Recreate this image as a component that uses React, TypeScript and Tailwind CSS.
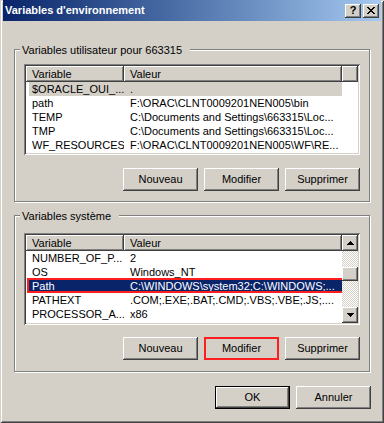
import React from "react"
import clsx from "clsx"

// classic 3D edges
const raised = "shadow-[inset_-1px_-1px_#404040,inset_1px_1px_#ffffff,inset_-2px_-2px_#808080,inset_2px_2px_#d4d0c8]"
const sunken = "shadow-[inset_1px_1px_#808080,inset_-1px_-1px_#ffffff,inset_2px_2px_#404040,inset_-2px_-2px_#d4d0c8]"
const headerEdge = "shadow-[inset_-1px_-1px_#404040,inset_1px_1px_#ffffff,inset_-2px_-2px_#808080]"
const checker = "bg-[image:repeating-conic-gradient(#d4d0c8_0%_25%,#ffffff_0%_50%)] bg-[length:2px_2px]"

type Row = [string, string]

const userVars: Row[] = [
  ["$ORACLE_OUI_...", "."],
  ["path", "F:\\ORAC\\CLNT0009201NEN005\\bin"],
  ["TEMP", "C:\\Documents and Settings\\663315\\Loc..."],
  ["TMP", "C:\\Documents and Settings\\663315\\Loc..."],
  ["WF_RESOURCES", "F:\\ORAC\\CLNT0009201NEN005\\WF\\RE..."],
]

const systemVars: Row[] = [
  ["NUMBER_OF_P...", "2"],
  ["OS", "Windows_NT"],
  ["Path", "C:\\WINDOWS\\system32;C:\\WINDOWS;..."],
  ["PATHEXT", ".COM;.EXE;.BAT;.CMD;.VBS;.VBE;.JS;...."],
  ["PROCESSOR_A...", "x86"],
]

const Arrow = ({ down }: { down?: boolean }) => (
  <svg width="7" height="4" viewBox="0 0 7 4" shapeRendering="crispEdges" className={down ? "rotate-180" : ""}>
    <path d="M3 0h1v1h1v1h1v1h1v1H0V3h1V2h1V1h1z" fill="#000" />
  </svg>
)

const CloseGlyph = () => (
  <svg width="8" height="7" viewBox="0 0 8 7" shapeRendering="crispEdges">
    <g fill="#000">
      <rect x="0" y="0" width="2" height="1" />
      <rect x="6" y="0" width="2" height="1" />
      <rect x="1" y="1" width="2" height="1" />
      <rect x="5" y="1" width="2" height="1" />
      <rect x="2" y="2" width="4" height="1" />
      <rect x="3" y="3" width="2" height="1" />
      <rect x="2" y="4" width="4" height="1" />
      <rect x="1" y="5" width="2" height="1" />
      <rect x="5" y="5" width="2" height="1" />
      <rect x="0" y="6" width="2" height="1" />
      <rect x="6" y="6" width="2" height="1" />
    </g>
  </svg>
)

const Button = ({ label, isDefault, marked }: { label: string; isDefault?: boolean; marked?: boolean }) => (
  <div
    className={clsx(
      "flex h-[23px] w-[75px] items-center justify-center bg-[#d4d0c8]",
      raised,
      isDefault && "border border-black",
      marked && "outline-2 -outline-offset-2 outline-[#ff1e1e]"
    )}
  >
    {label}
  </div>
)

const ListView = ({
  rows,
  className,
  selected,
  focused,
  scroll,
}: {
  rows: Row[]
  className: string
  selected: number
  focused?: boolean
  scroll?: boolean
}) => (
  <div className={clsx("flex w-[336px] bg-white p-[2px]", sunken, className)}>
    <div className="flex min-w-0 flex-1 flex-col overflow-hidden">
      <div className="flex h-[16px] shrink-0">
        <div className={clsx("flex w-[98px] items-center bg-[#d4d0c8] pl-[6px]", headerEdge)}>Variable</div>
        <div className={clsx("flex w-[218px] items-center bg-[#d4d0c8] pl-[6px]", headerEdge)}>Valeur</div>
        {!scroll && <div className={clsx("flex-1 bg-[#d4d0c8]", headerEdge)} />}
      </div>
      {rows.map(([name, value], i) => {
        const isSel = i === selected
        return (
          <div
            key={name}
            className={clsx(
              "relative ml-[3px] flex h-[14px] w-[313px] shrink-0 items-center whitespace-nowrap",
              isSel && !focused && "bg-[#d4d0c8]",
              isSel && focused && "bg-[#0a246a] text-white"
            )}
          >
            <div className="w-[95px] overflow-hidden pl-[3px]">{name}</div>
            <div className="w-[218px] overflow-hidden pl-[6px]">{value}</div>
            {isSel && focused && (
              <span className="absolute -left-[2px] -right-[2px] -top-[1px] bottom-0 border-2 border-[#ff1e1e]" />
            )}
          </div>
        )
      })}
    </div>
    {scroll && (
      <div className="flex w-[16px] shrink-0 flex-col">
        <div className={clsx("flex h-[16px] items-center justify-center bg-[#d4d0c8]", raised)}>
          <Arrow />
        </div>
        <div className={clsx("h-[16px]", checker)} />
        <div className={clsx("h-[14px] bg-[#d4d0c8]", raised)} />
        <div className={clsx("flex-1", checker)} />
        <div className={clsx("flex h-[16px] items-center justify-center bg-[#d4d0c8]", raised)}>
          <Arrow down />
        </div>
      </div>
    )}
  </div>
)

const GroupBox = ({ title, className, children }: { title: string; className: string; children: React.ReactNode }) => (
  <div
    className={clsx(
      "relative w-[356px] border border-[#808080] pl-[9px] shadow-[inset_1px_1px_#ffffff,1px_1px_#ffffff]",
      className
    )}
  >
    <span className="absolute left-[5px] top-[-6px] bg-[#d4d0c8] pl-[2px] pr-[8px] leading-[13px]">{title}</span>
    {children}
  </div>
)

export default function App() {
  return (
    <div
      className={clsx(
        "flex h-[423px] w-[384px] flex-col bg-[#d4d0c8] font-['Liberation_Sans',Arial,sans-serif] text-[11px] leading-[13px] text-black",
        "shadow-[inset_1px_1px_#d4d0c8,inset_-1px_-1px_#404040,inset_2px_2px_#ffffff,inset_-2px_-2px_#808080]"
      )}
    >
      <div className="mx-[3px] flex h-[21px] shrink-0 items-center bg-linear-to-r from-[#0a246a] to-[#a6caf0] pl-[2px] pr-[2px]">
        <span className="flex-1 text-[11px] font-bold text-white">Variables d'environnement</span>
        <div className="flex gap-[2px]">
          <div className={clsx("flex h-[14px] w-[16px] items-center justify-center bg-[#d4d0c8] text-[11px] font-bold leading-none", raised)}>
            ?
          </div>
          <div className={clsx("flex h-[14px] w-[16px] items-center justify-center bg-[#d4d0c8]", raised)}>
            <CloseGlyph />
          </div>
        </div>
      </div>

      <div className="flex flex-col px-[14px]">
        <GroupBox title="Variables utilisateur pour 663315" className="mt-[28px] h-[153px] pt-[14px]">
          <ListView rows={userVars} selected={0} className="h-[91px]" />
          <div className="mt-[13px] flex w-[336px] justify-end gap-[6px]">
            <Button label="Nouveau" />
            <Button label="Modifier" />
            <Button label="Supprimer" />
          </div>
        </GroupBox>

        <GroupBox title="Variables système" className="mt-[13px] h-[157px] pt-[17px]">
          <ListView rows={systemVars} selected={2} focused scroll className="h-[92px]" />
          <div className="mt-[12px] flex w-[336px] justify-end gap-[6px]">
            <Button label="Nouveau" />
            <Button label="Modifier" marked />
            <Button label="Supprimer" />
          </div>
        </GroupBox>

        <div className="mt-[14px] flex w-[357px] justify-end gap-[6px]">
          <Button label="OK" isDefault />
          <Button label="Annuler" />
        </div>
      </div>
    </div>
  )
}
